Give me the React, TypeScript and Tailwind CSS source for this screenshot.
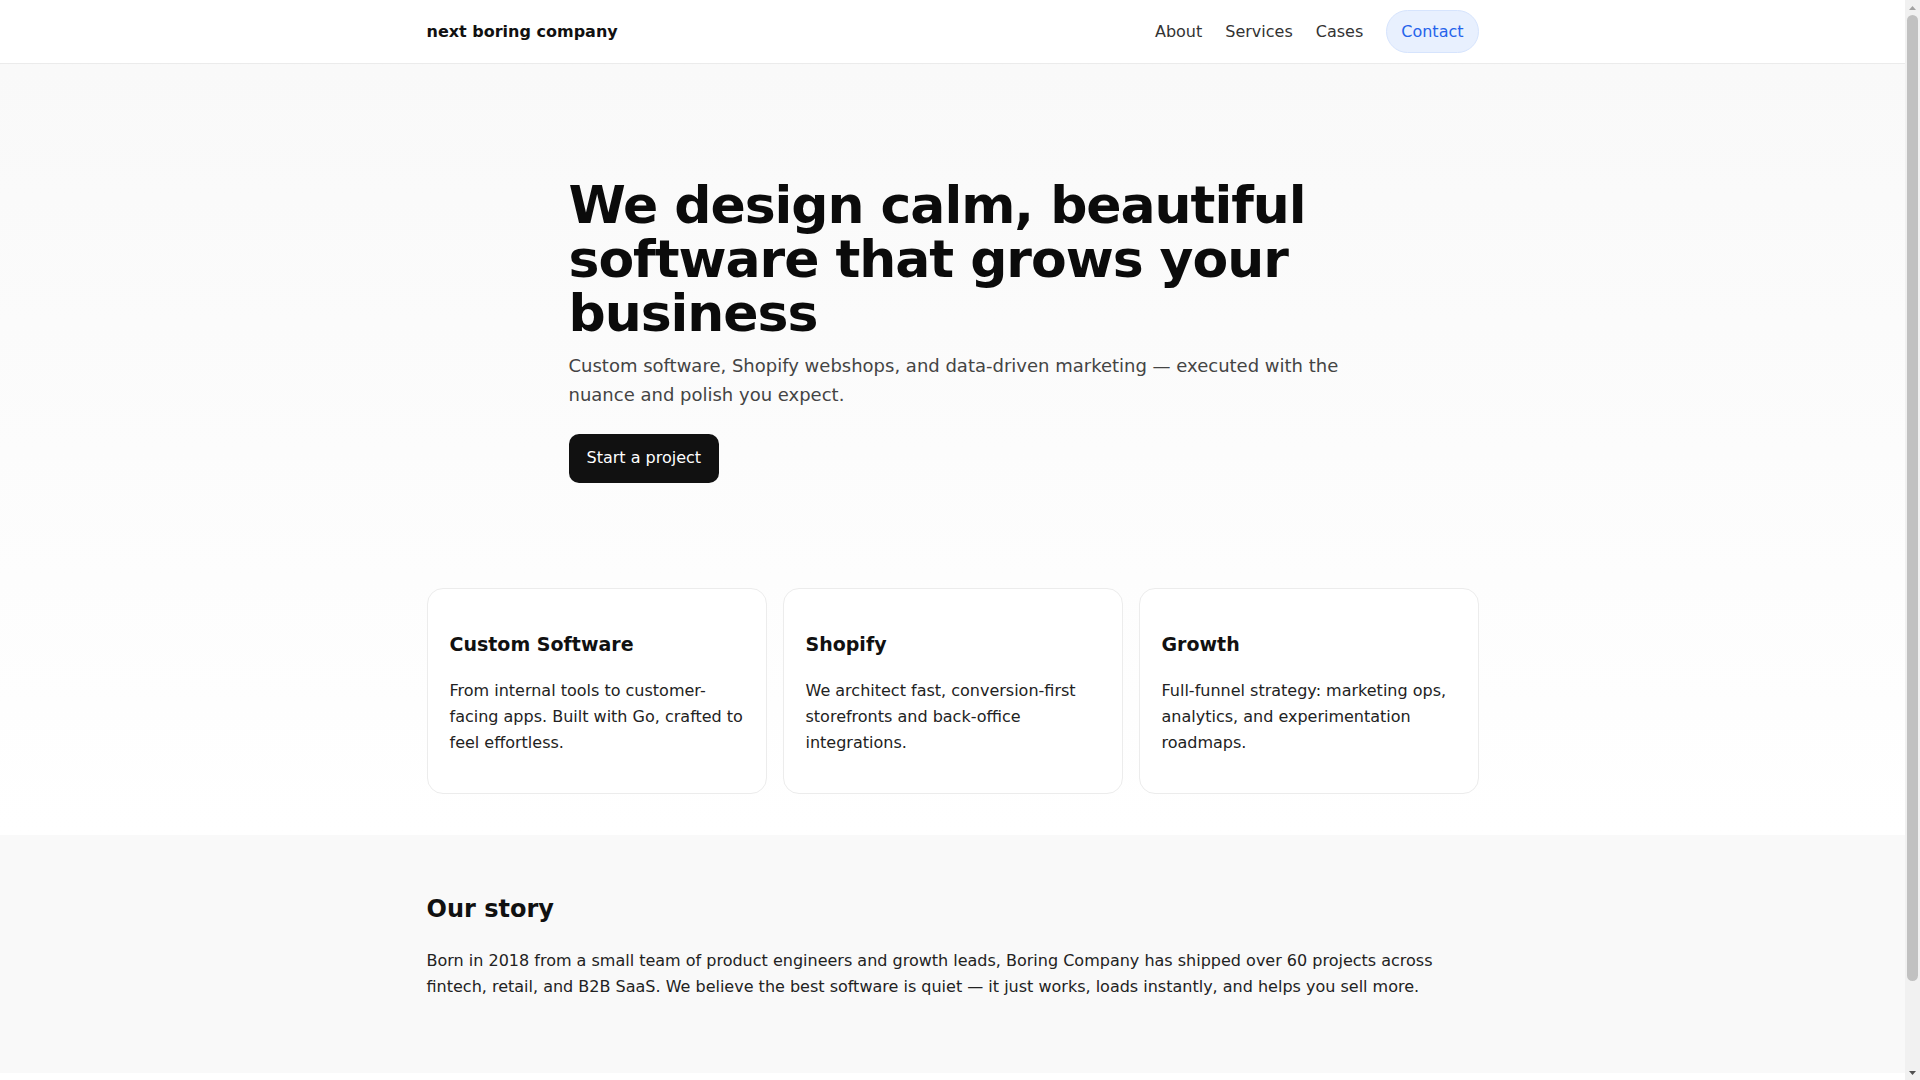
import React from "react";

const cards = [
  {
    title: "Custom Software",
    body: "From internal tools to customer-facing apps. Built with Go, crafted to feel effortless.",
  },
  {
    title: "Shopify",
    body: "We architect fast, conversion-first storefronts and back-office integrations.",
  },
  {
    title: "Growth",
    body: "Full-funnel strategy: marketing ops, analytics, and experimentation roadmaps.",
  },
];

function FakeScrollbar() {
  return (
    <div className="fixed right-0 top-0 flex h-screen w-[15px] flex-col bg-[#f1f1f1]">
      <div className="flex h-[15px] items-center justify-center">
        <svg width="7" height="4" viewBox="0 0 7 4">
          <path d="M0 4 L3.5 0 L7 4 Z" fill="#a3a3a3" />
        </svg>
      </div>
      <div className="flex-1 px-[2px]">
        <div className="h-[92%] rounded-full bg-[#c1c1c1]" />
      </div>
      <div className="flex h-[15px] items-center justify-center">
        <svg width="7" height="4" viewBox="0 0 7 4">
          <path d="M0 0 L3.5 4 L7 0 Z" fill="#505050" />
        </svg>
      </div>
    </div>
  );
}

export default function App() {
  return (
    <div className="min-h-screen bg-white text-[#111] font-['DejaVu_Sans',sans-serif]">
      <div className="mr-[15px]">
        <header className="h-16 border-b border-[#ebebeb] bg-white">
          <div className="mx-auto flex h-full max-w-[1100px] items-center justify-between px-6">
            <a className="text-base font-bold text-[#111]">next boring company</a>
            <nav className="flex items-center gap-[23px] text-base text-[#333]">
              <a>About</a>
              <a>Services</a>
              <a>Cases</a>
              <a className="inline-flex h-[43px] items-center rounded-full border border-[#d6e4fd] bg-[#e8f0fe] px-[14px] text-[#2563eb]">
                Contact
              </a>
            </nav>
          </div>
        </header>

        <section className="bg-gradient-to-b from-[#f9f9f9] to-white pb-[41px]">
          <div className="mx-auto max-w-[1100px] px-6">
            <div className="mx-auto max-w-3xl pt-[114px]">
              <h1 className="text-[52px] font-bold leading-[1.04] tracking-[-0.02em] text-[#0b0b0b]">
                We design calm, beautiful software that grows your business
              </h1>
              <p className="mt-3 mr-[-32px] text-lg leading-[1.6] text-[#444]">
                Custom software, Shopify webshops, and data-driven marketing — executed with the nuance and polish you expect.
              </p>
              <a className="mt-6 inline-flex h-[49px] items-center rounded-[10px] bg-[#111] px-[18px] text-base text-white">
                Start a project
              </a>
            </div>

            <div className="mt-[105px] grid grid-cols-3 gap-4">
              {cards.map((c) => (
                <div
                  key={c.title}
                  className="rounded-2xl border border-[#ececec] bg-white px-[22px] pt-[43px] pb-[37px]"
                >
                  <h3 className="text-[19px] font-bold leading-[25px] text-[#111]">{c.title}</h3>
                  <p className="mt-[21px] text-base leading-[26px] text-[#222]">{c.body}</p>
                </div>
              ))}
            </div>
          </div>
        </section>

        <section className="bg-[#f9f9f9] pt-[59px] pb-[73px]">
          <div className="mx-auto max-w-[1100px] px-6">
            <h2 className="text-2xl font-bold leading-[31px] text-[#111]">Our story</h2>
            <p className="mt-[23px] text-base leading-[26px] text-[#222]">
              Born in 2018 from a small team of product engineers and growth leads, Boring Company has shipped over 60 projects across fintech, retail, and B2B SaaS. We believe the best software is quiet — it just works, loads instantly, and helps you sell more.
            </p>
          </div>
        </section>

        <footer className="h-[80px] bg-white" />
      </div>
      <FakeScrollbar />
    </div>
  );
}
